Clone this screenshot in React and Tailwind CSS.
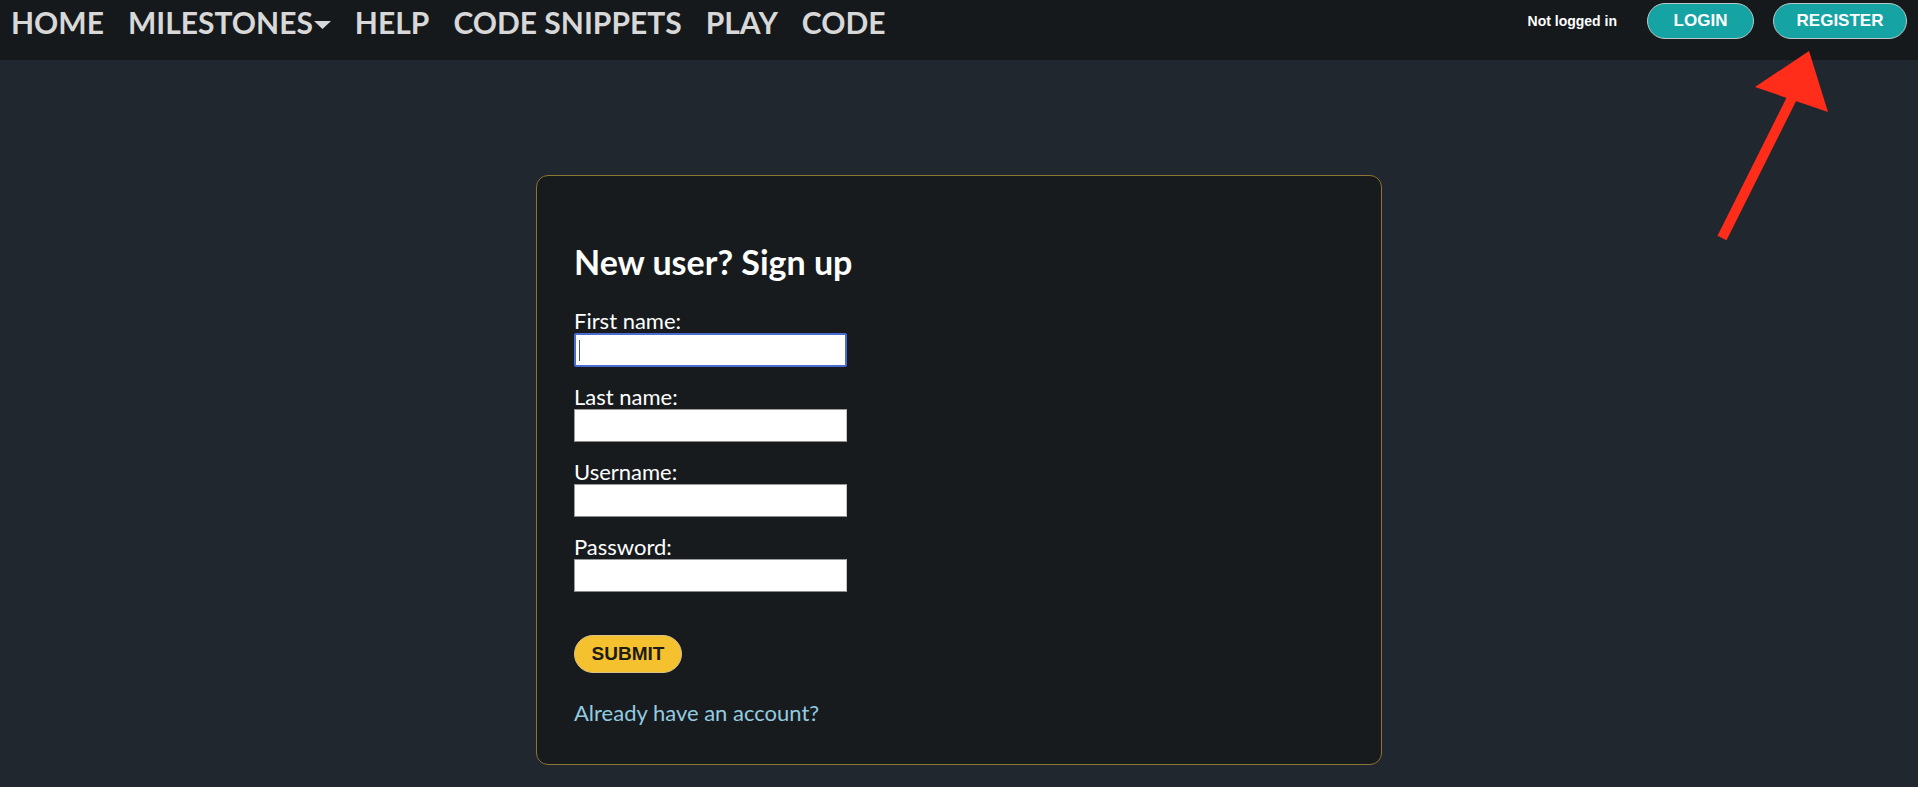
import React from "react";

export default function App() {
  const navItems = ["HOME", "MILESTONES", "HELP", "CODE SNIPPETS", "PLAY", "CODE"];
  const fields = ["First name:", "Last name:", "Username:", "Password:"];
  return (
    <div className="relative min-h-screen bg-[#21272e]">
      <nav className="flex h-[60px] items-start justify-between bg-[#16191c] pl-[11px] pr-[11px]">
        <ul className="flex items-center gap-[24px] pt-[4px] font-['Lato','Liberation_Sans',sans-serif] text-[30px] font-bold leading-[36px] text-[#d8d8d8]">
          {navItems.map((n) => (
            <li key={n} className="flex items-center">
              {n}
              {n === "MILESTONES" && (
                <svg width="17" height="8" viewBox="0 0 17 8" className="ml-[1px] mt-[5px]">
                  <polygon points="0,0 17,0 8.5,8" fill="#d8d8d8" />
                </svg>
              )}
            </li>
          ))}
        </ul>
        <div className="flex items-center pt-[3px] font-['Liberation_Sans',Arial,sans-serif]">
          <span className="mr-[30px] text-[14px] font-bold text-white">Not logged in</span>
          <button className="flex h-[36px] w-[107px] items-center justify-center rounded-full border border-[#b9c9c9] bg-[#16a3a4] text-[17px] font-bold text-white">
            LOGIN
          </button>
          <button className="ml-[19px] flex h-[36px] w-[134px] items-center justify-center rounded-full border border-[#b9c9c9] bg-[#16a3a4] text-[17px] font-bold text-white">
            REGISTER
          </button>
        </div>
      </nav>

      <main className="flex justify-center pt-[115px] font-['Lato','Liberation_Sans',sans-serif]">
        <div className="w-[846px] rounded-[12px] border border-[#8a7533] bg-[#181b1e] pb-[39px] pl-[37px] pt-[66px]">
          <h1 className="text-[34px] font-bold leading-[40px] text-white">New user? Sign up</h1>
          <form className="mt-[27px] flex flex-col">
            {fields.map((f, i) => (
              <div key={f} className={i > 0 ? "mt-[18px]" : ""}>
                <label className="block text-[22px] leading-[24px] text-white">{f}</label>
                {i === 0 ? (
                  <div className="relative h-[34px] w-[273px] rounded-[2px] border-2 border-[#4a6bd0] bg-white">
                    <span className="absolute left-[3px] top-[5px] h-[21px] w-[1px] bg-[#555]" />
                  </div>
                ) : (
                  <input
                    type={f === "Password:" ? "password" : "text"}
                    className="block h-[33px] w-[273px] border border-t-[#9a9a9a] border-l-[#9a9a9a] border-r-[#c4c4c4] border-b-[#8a8a8a] bg-white outline-none"
                  />
                )}
              </div>
            ))}
            <div className="mt-[43px]">
              <button
                type="button"
                className="h-[38px] w-[108px] rounded-full border border-[#d9c38a] bg-[#f5c12e] font-['Liberation_Sans',Arial,sans-serif] text-[19px] font-bold text-[#1c1b18]"
              >
                SUBMIT
              </button>
            </div>
            <a className="mt-[28px] block text-[22px] leading-[24px] text-[#93cbe0]">Already have an account?</a>
          </form>
        </div>
      </main>

      <svg
        className="absolute left-[1700px] top-[40px]"
        width="140"
        height="210"
        viewBox="0 0 140 210"
      >
        <line x1="22" y1="198" x2="92" y2="58" stroke="#ff2d1a" strokeWidth="10" />
        <polygon points="109,11 55,47 128,72" fill="#ff2d1a" />
      </svg>
    </div>
  );
}
